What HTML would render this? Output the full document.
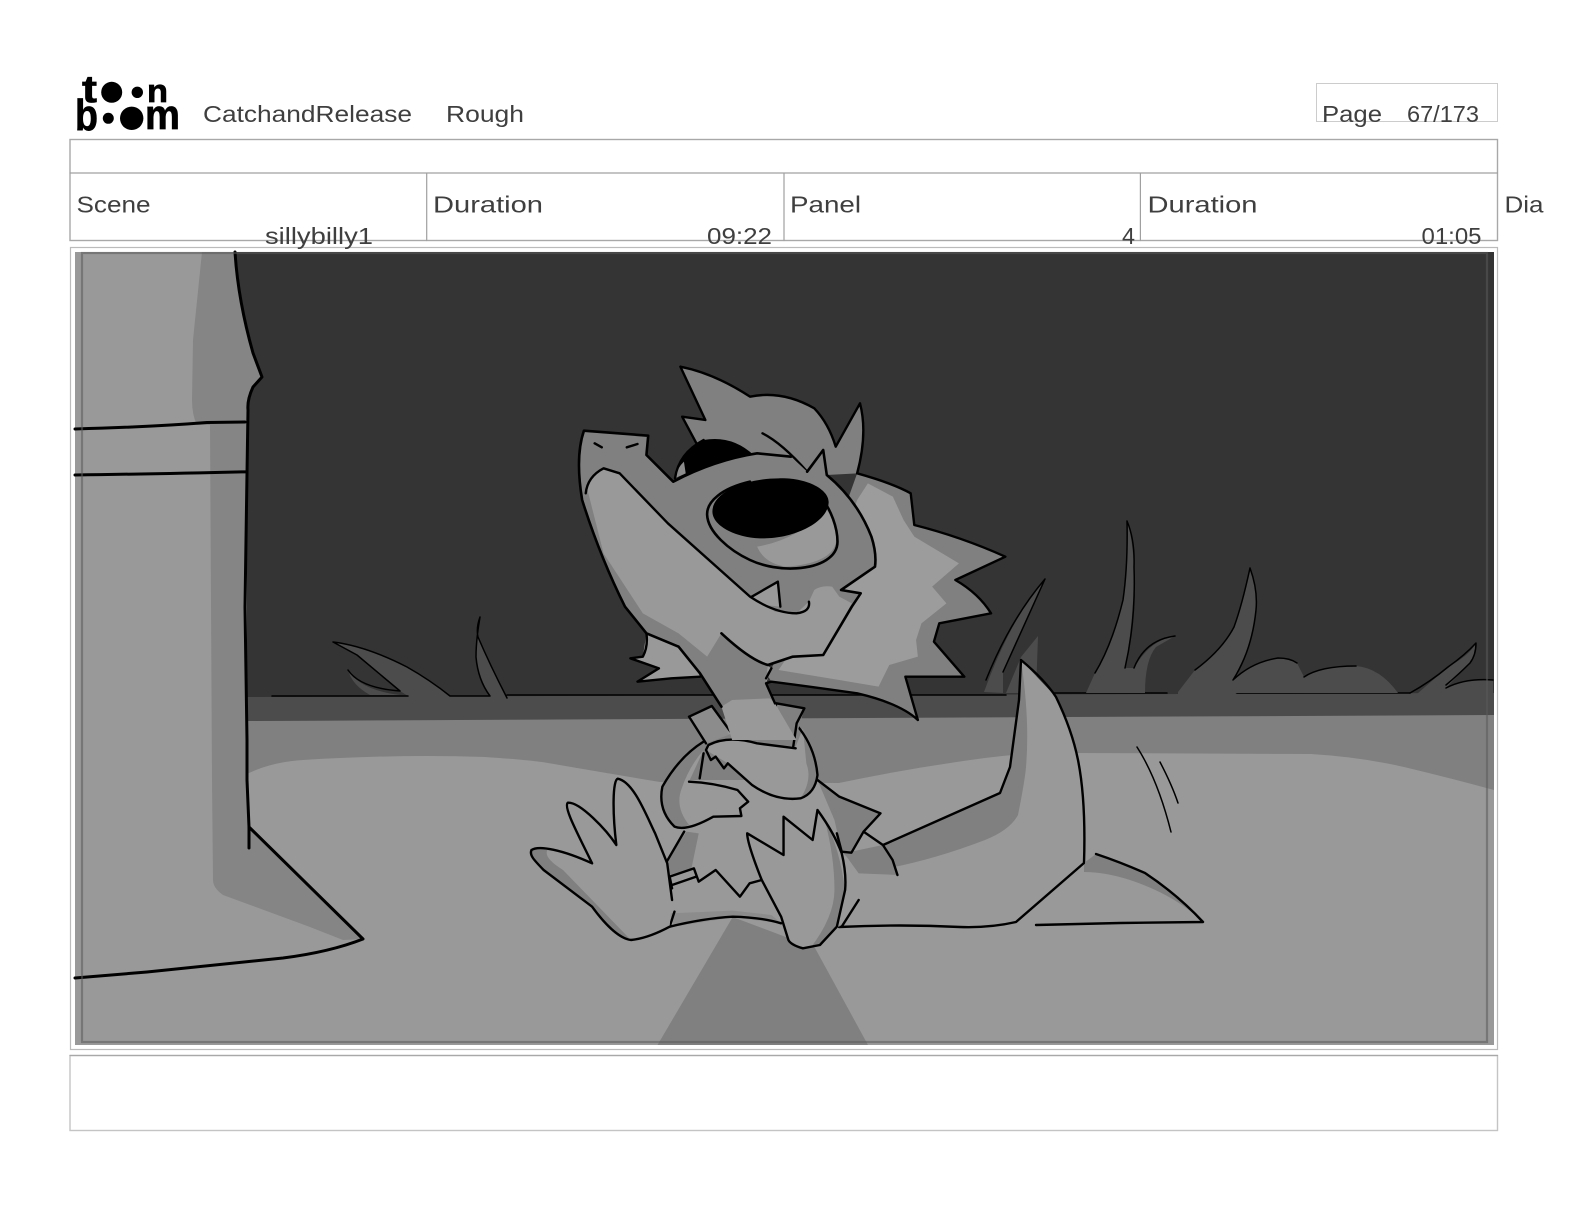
<!DOCTYPE html>
<html><head><meta charset="utf-8"><title>CatchandRelease Rough</title>
<style>
html,body{margin:0;padding:0;background:#fff;width:1584px;height:1224px;overflow:hidden}
svg{display:block;position:absolute;left:0;top:0}
svg path{vector-effect:non-scaling-stroke;stroke-linejoin:round;stroke-linecap:round}
.t{font-family:"Liberation Sans",sans-serif;font-size:23px;fill:#3f3f3f}
.lg{font-family:"Liberation Sans",sans-serif;font-weight:bold;fill:#000;stroke:#000;stroke-width:.7}
.ln{fill:none;stroke:#000;stroke-width:2.4}
.th{fill:none;stroke:#000;stroke-width:1.5}
</style></head><body>
<svg width="1584" height="1224" viewBox="0 0 1584 1224" xmlns="http://www.w3.org/2000/svg">
<rect width="1584" height="1224" fill="#fff"/>

<!-- frames -->
<rect x="1316.5" y="83.5" width="181" height="38" fill="none" stroke="#ccc"/>
<rect x="70" y="139.5" width="1427.5" height="101" fill="none" stroke="#a8a8a8" stroke-width="1.4"/>
<path d="M70 173H1497.5M426.7 173V240.5M784 173V240.5M1140.4 173V240.5" fill="none" stroke="#a0a0a0" stroke-width="1.2"/>
<rect x="70.5" y="247.5" width="1427" height="802" fill="none" stroke="#bbb" stroke-width="1.2"/>
<rect x="70" y="1055.5" width="1427.5" height="75" fill="none" stroke="#c4c4c4" stroke-width="1.4"/>
<path d="M70 1055.5H1497.5" stroke="#a8a8a8" stroke-width="1.2"/>

<!-- scene -->
<rect x="75" y="252" width="1419" height="793" fill="#343434"/>
<path d="M245 697L1494 693V716L245 721Z" fill="#4c4c4c"/>
<path d="M245 721L1494 715V800H245Z" fill="#808080"/>
<path d="M245 775Q270 762 303 760Q400 754 485 757Q530 760 548 763Q600 772 660 782L839 783Q910 768 985 758Q1030 752 1071 753L1311 754Q1360 757 1404 767Q1450 778 1494 790V1045H75V775Z" fill="#999"/>
<path d="M732.7 917L657.5 1045H868L815 948Z" fill="#808080"/>

<!-- bushes left -->
<path d="M333 642Q366 646 407 667Q430 680 450 696L452 710H395L408 696L400 691L357 655Z" fill="#4c4c4c"/>
<path d="M348 670Q360 690 400 695H370Q352 685 348 670Z" fill="#4c4c4c"/>
<path d="M480 617Q476 640 476 657Q478 680 490 696L510 705L507 698Q490 665 478 637Z" fill="#4c4c4c"/>
<path class="th" d="M272 696H408M400 691L357 655L333 642Q366 646 407 667Q430 680 450 696H490Q478 680 476 657Q476 640 480 617Q476 628 478 637Q490 665 507 698M348 670Q360 688 400 691M507 695H1006M1047 693H1167M1237 693H1410"/>

<!-- bushes right -->
<path d="M1045 579Q1010 620 984 692L1003 693L1003 672Z" fill="#4c4c4c"/>
<path d="M1038 636L1021 657L1006 693H1036Z" fill="#4c4c4c"/>
<path d="M1127 521Q1128 565 1123 600Q1112 645 1095 673L1086 693H1145Q1145 660 1156 647L1175 636Q1150 640 1134 668L1125 668Q1134 620 1134 567Q1132 535 1127 521Z" fill="#4c4c4c"/>
<path d="M1250 568Q1242 605 1234 627Q1222 650 1195 670L1178 692L1178 700H1410L1448 667Q1470 655 1476 643Q1476 655 1470 663L1446 688Q1470 678 1493 680V700H1237L1233 680Q1245 655 1249 647Q1258 610 1256 600Q1255 580 1250 568Z" fill="#4c4c4c"/>
<path d="M1233 680Q1252 662 1278 658Q1290 658 1297 663L1304 677Q1325 666 1356 666Q1380 668 1398 693H1233Z" fill="#4c4c4c"/>
<path class="th" d="M1045 579Q1010 620 986 680M1045 579L1003 672M1127 521Q1128 565 1123 600Q1112 645 1095 673M1127 521Q1135 540 1134 567Q1136 620 1125 668M1134 668Q1145 640 1175 636M1250 568Q1242 605 1234 627Q1222 650 1195 670M1250 568Q1258 590 1256 610Q1252 650 1233 680Q1252 662 1278 658Q1290 658 1297 663M1304 677Q1320 666 1356 666M1410 693Q1430 682 1448 667Q1465 655 1476 643Q1476 655 1470 663Q1458 675 1446 685M1446 688Q1465 678 1493 680"/>

<!-- building -->
<path d="M75 252H235Q238 300 253 353L262 377L253 387Q247 400 248 410L247 473L245 607L247 740V780L249 827L363 939Q330 952 283 958L147 972L75 978Z" fill="#999"/>
<path d="M202 252H235Q238 300 253 353L262 377L253 387Q247 400 248 410L247 425H197Q192 415 192 400L193 340Z" fill="#858585"/>
<path d="M210 425H247V780L249 827L363 939L343 940L310 927L223 895Q213 888 213 880L212 780Z" fill="#858585"/>
<path class="ln" style="stroke-width:3" d="M235 252Q238 300 253 353L262 377L253 387Q247 400 248 410L247 473L245 607L247 740V780L249 827V848M249 827L363 939Q330 952 283 958L147 972L75 978M75 429Q150 427 207 422.5L245 422M75 475Q150 474 247 471.7"/>

<!-- tail fin, tail -->
<path d="M1084 863L1096 854Q1120 862 1145 873Q1178 895 1203 922L1036 925L1016 922Z" fill="#999"/>
<path d="M1084 863L1096 854Q1120 862 1145 873Q1178 895 1203 922Q1175 895 1130 880Q1105 872 1084 872Z" fill="#808080"/>
<path class="ln" d="M1096 854Q1120 862 1145 873Q1178 895 1203 922L1120 923L1036 925"/>
<path d="M1021 660L1056 697Q1072 730 1078 760L1086 820V863L1016 922L960 927L839 927L830 880L883 845L1000 793L1010 767L1019 700Z" fill="#999"/>
<path d="M1019 700L1010 767L1000 793L883 845L858 853L847 880L859 873Q920 865 985 840Q1010 830 1018 815Q1025 780 1026 767Q1030 720 1021 660Z" fill="#808080"/>
<path class="ln" d="M1021 660L1019 700L1010 767L1000 793L883 845M1021 660Q1045 680 1056 697Q1072 730 1078 760Q1086 800 1084 863L1016 922Q990 928 960 927Q900 924 839 927"/>
<path class="th" d="M1137 747Q1158 780 1171 832M1160 762Q1172 785 1178 803"/>

<!-- character body -->
<g transform="translate(500 700) scale(.4847 .33333)">
<path d="M385 395L340 490L360 640L350 680L420 655L480 650L580 670L700 680L740 560L790 435L785 340L700 290L655 240L390 240Z" fill="#999"/>
<path d="M655 240L700 290L785 340L750 395L725 455L790 435L820 525L740 520L715 470L705 455L690 360Z" fill="#808080"/>
<path d="M385 395L340 490L350 525L395 505L410 400Z" fill="#808080"/>
<path d="M350 640L480 632L560 645L580 670L480 652L360 680Z" fill="#8c8c8c"/>
<path class="ln" d="M380 395L342 490M655 240L700 290L785 340L750 395L725 458L705 455L695 400M750 395L790 435L810 480L820 525M350 530L400 505L410 545L445 510L495 590L515 550L540 540M355 555L405 530M350 530L355 565M360 635L350 680Q420 655 480 650Q540 652 580 670M705 680L740 600"/>
<!-- arms -->
<path d="M420 125Q370 170 335 260Q325 330 360 380Q385 395 440 350L500 345L510 300L490 270L440 250L390 245L420 150Z" fill="#999"/>
<path d="M420 125Q370 170 335 260Q325 330 360 380Q372 385 390 375Q360 320 375 265Q390 200 420 150Z" fill="#808080"/>
<path class="ln" d="M420 125Q370 170 335 260Q325 330 360 380Q385 395 440 350L498 348L495 325L512 305L490 270Q440 248 390 245M420 160L412 235"/>
<path d="M430 135Q470 105 530 130L610 140L625 85Q655 160 655 225Q650 280 620 295Q570 305 520 255L470 190L425 150Z" fill="#999"/>
<path d="M625 85Q655 160 655 225Q650 280 620 295Q645 240 632 190Z" fill="#808080"/>
<path class="ln" d="M430 135Q470 105 530 130L610 145M612 75Q650 140 655 225Q650 280 620 295Q570 305 520 255L470 190L462 205L445 170L435 180L425 150L430 135"/>
<!-- collar -->
<path d="M390 50L437 18L480 100L425 130Z" fill="#8c8c8c"/>
<path d="M565 10L628 25L605 140L570 110Z" fill="#808080"/>
<path d="M470 15L570 10L590 110L500 110L470 100Z" fill="#999"/>
<path class="ln" d="M425 130L390 50L437 18L478 100L495 75L520 98L545 65L560 85L570 10L628 25L612 70L605 140"/>
<!-- feet -->
<path d="M65 450Q100 435 190 490L140 310Q190 340 240 435L240 240Q285 270 320 400L345 490L355 600L350 680L270 720Q245 715 190 620L90 510Q65 470 65 450Z" fill="#999"/>
<path d="M65 450Q90 440 100 445Q85 470 130 510L250 690L270 720Q245 715 190 620L90 510Q65 470 65 450Z" fill="#808080"/>
<path class="ln" d="M65 450C80 435 130 450 190 490C160 400 130 320 140 308C165 305 220 390 240 435C232 340 232 240 243 236C275 245 300 340 320 400L345 490L355 600M350 680Q305 715 270 720C245 715 215 670 190 620L90 510C70 480 60 465 65 450"/>
<path d="M510 400L585 465L585 350L645 420L655 330Q690 400 705 460L712 570L695 680L660 735L625 745L595 720L580 650L540 540Q510 430 510 400Z" fill="#999"/>
<path d="M670 360Q700 440 712 570L695 680L660 735L640 745Q690 650 690 570Q690 470 670 360Z" fill="#808080"/>
<path class="ln" d="M510 400L585 465L585 350L645 420L655 330Q690 400 705 460Q715 520 712 570L695 680L660 735L625 745Q600 735 595 720L580 650L540 540Q510 430 510 400Z"/>
</g>

<!-- character head -->
<g transform="translate(500 340) scale(.35714 .33333)">
<!-- left mane -->
<path d="M410 880L400 950L365 955L445 985L385 1025L480 1015L560 1010L520 900Z" fill="#999"/>
<path class="ln" d="M410 880Q415 920 400 950L365 955L445 985L385 1025L480 1015L560 1010"/>
<!-- neck -->
<path d="M410 880L500 920L560 1000L620 1100L650 1200L830 1200L770 1090L745 1030L760 985L700 940L620 860Z" fill="#999"/>
<path d="M410 880L500 920L560 1000L620 1100L650 1080L755 1075L770 1090L745 1030L750 970L620 860L500 880Z" fill="#808080"/>
<!-- right mane -->
<path d="M1000 400Q1100 430 1150 460L1160 555Q1290 590 1415 650L1275 720Q1340 760 1375 820L1230 850L1215 905L1300 1010L1135 1010L1170 1140Q1120 1090 1000 1060Q870 1040 760 1025L745 1000L760 985L900 700Z" fill="#808080"/>
<path d="M1000 480L1030 430L1100 470L1130 540L1160 590L1285 670L1210 740L1250 790L1180 850L1165 900L1170 950L1090 975L1060 1040L950 1020L780 990L900 800Z" fill="#9c9c9c"/>
<path class="ln" d="M1000 400Q1100 430 1150 460L1160 555Q1290 590 1415 650L1275 720Q1340 760 1375 820L1230 850L1215 905L1300 1010L1135 1010L1170 1140Q1120 1090 1000 1060Q870 1040 760 1025L745 1030L770 1090M760 985L745 1015"/>
<!-- hair -->
<path d="M505 80Q600 100 700 170Q790 150 880 205Q920 250 940 320L1008 190Q1030 280 1000 400L915 405L880 400L500 420L550 310L510 230L575 240Z" fill="#808080"/>
<path class="ln" d="M505 80Q600 100 700 170Q790 150 880 205Q920 250 940 320L1008 190Q1030 280 1000 400M505 80L575 240L510 230L550 310M735 280Q790 310 860 395"/>
<!-- far eye -->
<path d="M490 415Q500 340 570 300Q650 285 710 345L600 370L520 405Z" fill="#000"/>
<path d="M490 415Q495 385 515 365L520 400Z" fill="#8c8c8c"/>
<path class="ln" d="M490 415Q500 340 570 300"/>
<!-- head base -->
<path d="M235 272L415 287L410 345L485 425Q600 360 720 340L815 350L860 395L905 330L915 405Q1000 480 1040 590Q1055 640 1050 680L955 750L1010 760L905 945L820 950L750 975Q700 960 620 880L500 920L410 880L350 800Q280 650 230 480Q210 350 235 272Z" fill="#808080"/>
<!-- jaw light -->
<path d="M245 450Q250 410 290 385L335 400L470 550L700 770L770 815L830 820L865 785L880 750Q900 735 930 740L950 770L985 790L905 945L820 950L750 975Q700 960 620 880L580 950L500 880L400 820L290 640Z" fill="#999"/>
<path d="M705 770L778 725L785 800L740 795Z" fill="#999"/>
<!-- eye -->
<path d="M700 425C620 445 578 485 580 525C582 575 640 630 700 660C740 680 790 688 830 685C900 680 945 650 945 605C945 560 925 510 905 480L800 400Z" fill="#808080"/>
<path d="M720 620Q830 600 915 510Q950 560 940 610Q925 670 800 680Q740 670 720 620Z" fill="#999"/>
<path d="M595 510C600 450 700 415 780 415C860 412 925 450 920 490C915 550 820 595 740 595C670 597 590 560 595 510Z" fill="#000"/>
<path class="ln" style="stroke-width:2.6" d="M700 425C620 445 578 485 580 525C582 575 640 630 700 660C740 680 790 688 830 685C900 680 945 650 945 605C945 560 925 510 905 480"/>
<!-- head lines -->
<path class="ln" style="stroke-width:2.6" d="M410 880L350 800Q280 650 230 480Q210 350 235 272L415 287L410 345L485 425Q600 360 720 340L815 350M860 395L905 330L915 405Q1000 480 1040 590Q1055 640 1050 680L955 750L1010 760L985 800L905 945L820 950L750 975Q700 960 620 880M500 920L410 880M500 920L560 1000L620 1100"/>
<path class="ln" d="M240 460Q245 410 290 385L335 400L470 550L700 770Q770 820 830 820Q870 815 865 785M705 770L778 725L785 800M265 310L285 322M355 322L385 312"/>
</g>

<!-- camera frame -->
<rect x="82" y="253" width="1405" height="789" fill="none" stroke="#5a5a5a" stroke-opacity=".55" stroke-width="2.2"/>

<!-- logo -->
<g class="lg">
<text x="82" y="102" font-size="38" textLength="15" lengthAdjust="spacingAndGlyphs">t</text>
<text x="147" y="102" font-size="32" textLength="21" lengthAdjust="spacingAndGlyphs">n</text>
<text x="75" y="130" font-size="44" textLength="23" lengthAdjust="spacingAndGlyphs">b</text>
<text x="145" y="129" font-size="42" textLength="35" lengthAdjust="spacingAndGlyphs">m</text>
</g>
<g fill="#000">
<circle cx="111.7" cy="92.3" r="10.5"/><circle cx="137.3" cy="92.3" r="5.7"/>
<circle cx="108.3" cy="118.3" r="5.5"/><circle cx="131.7" cy="118.3" r="11.7"/>
</g>

<!-- text -->
<text class="t" x="203" y="122" textLength="209" lengthAdjust="spacingAndGlyphs">CatchandRelease</text>
<text class="t" x="446" y="122" textLength="78" lengthAdjust="spacingAndGlyphs">Rough</text>
<text class="t" x="1322" y="122" textLength="60" lengthAdjust="spacingAndGlyphs">Page</text>
<text class="t" x="1407" y="122" textLength="72" lengthAdjust="spacingAndGlyphs">67/173</text>
<text class="t" x="76.5" y="212.7" textLength="74" lengthAdjust="spacingAndGlyphs">Scene</text>
<text class="t" x="433" y="212.7" textLength="110" lengthAdjust="spacingAndGlyphs">Duration</text>
<text class="t" x="790" y="212.7" textLength="71" lengthAdjust="spacingAndGlyphs">Panel</text>
<text class="t" x="1147.5" y="212.7" textLength="110" lengthAdjust="spacingAndGlyphs">Duration</text>
<text class="t" x="1504.5" y="212.7" textLength="39" lengthAdjust="spacingAndGlyphs">Dia</text>
<text class="t" x="265" y="244" textLength="108" lengthAdjust="spacingAndGlyphs">sillybilly1</text>
<text class="t" x="707" y="244" textLength="65" lengthAdjust="spacingAndGlyphs">09:22</text>
<text class="t" x="1122" y="244" textLength="13" lengthAdjust="spacingAndGlyphs">4</text>
<text class="t" x="1421.5" y="244" textLength="60" lengthAdjust="spacingAndGlyphs">01:05</text>
</svg>
</body></html>
